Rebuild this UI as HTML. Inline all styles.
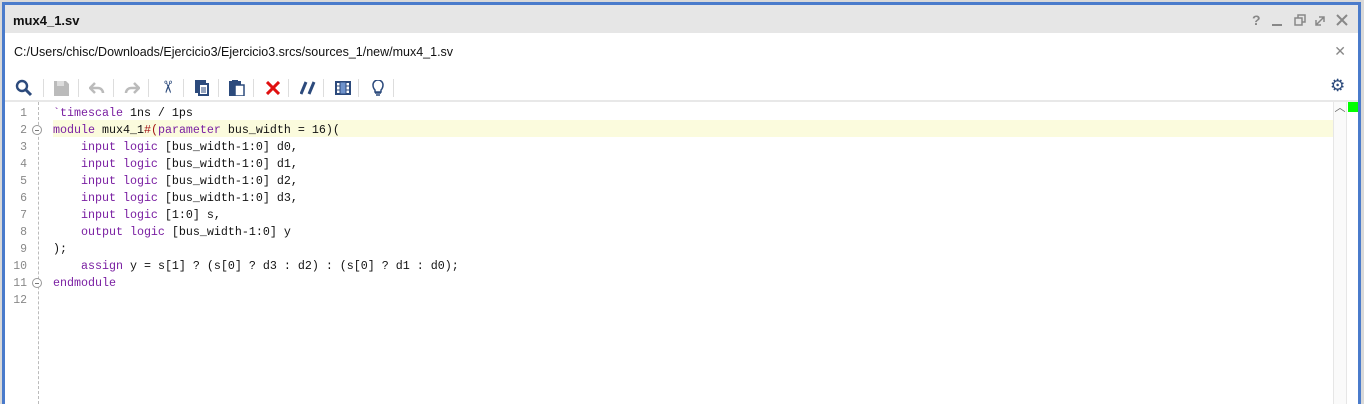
<!DOCTYPE html>
<html><head><meta charset="utf-8"><style>
*{margin:0;padding:0;box-sizing:border-box}
body{width:1364px;height:402px;background:#d9d9d9;overflow:hidden;font-family:"Liberation Sans",sans-serif;position:relative}
#frame{position:absolute;left:2px;top:2px;width:1359px;height:402px;border:3px solid #4a7bcb;border-bottom:none;background:#fff}
#title{position:absolute;left:0;top:0;right:0;height:28px;background:#e6e6e6;font-weight:bold;font-size:13px;color:#111;padding:8px 0 0 8px}
#path{position:absolute;left:9px;top:40px;font-size:12.5px;color:#111}
#tb{position:absolute;left:0;top:68px;right:0;height:28px}
.sep{position:absolute;top:6px;width:1px;height:18px;background:#ddd}
.ic{position:absolute;top:6px}
#ed{position:absolute;left:0;top:95px;right:0;bottom:0;border-top:2px solid #e8e8e8}
.ln{position:absolute;left:0;width:22px;text-align:right;font-family:"Liberation Mono",monospace;font-size:11.5px;color:#888}
.code{position:absolute;left:48px;font-family:"Liberation Mono",monospace;font-size:11.67px;color:#111;white-space:pre;line-height:17px}
.k{color:#7a1fa2}
.r{color:#a31515}
#gut{position:absolute;left:33px;top:0;bottom:0;border-left:1px dashed #bbb}
#hl{position:absolute;left:48px;top:18px;width:1280px;height:17px;background:#fbfbdd}
#sb{position:absolute;left:1328px;top:0;width:14px;bottom:0;background:#fafafa;border-left:1px solid #e6e6e6;border-right:1px solid #e6e6e6}
.fold{position:absolute;left:27px;width:10px;height:10px;border:1px solid #999;border-radius:50%;background:#fff}
.fold:after{content:"";position:absolute;left:2px;top:4px;width:4px;height:1px;background:#777}
</style></head><body>
<div id="frame">
<div id="title">mux4_1.sv
<svg style="position:absolute;right:8px;top:8px" width="100" height="14" fill="none" stroke="#888" stroke-width="2">
<text x="2" y="12" fill="#888" stroke="none" font-size="14" font-weight="bold" font-family="Liberation Sans">?</text>
<line x1="22" y1="12" x2="32" y2="12"/>
<rect x="45" y="5" width="7" height="7" stroke-width="1.5"/><path d="M48 5V2h7v7h-3" stroke-width="1.5"/>
<path d="M66 12l8-8M69 4h5v5M66 7v5h5" stroke-width="1.5"/>
<path d="M87 2l10 10M97 2L87 12"/>
</svg></div>
<div id="path">C:/Users/chisc/Downloads/Ejercicio3/Ejercicio3.srcs/sources_1/new/mux4_1.sv</div>
<div style="position:absolute;right:12px;top:38px;color:#888;font-size:14px">✕</div>
<div id="tb">
<svg class="ic" style="left:10px" width="18" height="18"><circle cx="7" cy="7" r="5" fill="none" stroke="#2c4a7c" stroke-width="2.4"/><line x1="11" y1="11" x2="16" y2="16" stroke="#2c4a7c" stroke-width="3"/></svg>
<div class="sep" style="left:38px"></div>
<svg class="ic" style="left:49px;top:8px" width="15" height="15"><path d="M0 0h12l3 3v12H0z" fill="#bbb"/><rect x="3" y="0" width="7" height="5" fill="#ddd"/></svg>
<div class="sep" style="left:73px"></div>
<svg class="ic" style="left:84px;top:9px" width="16" height="12"><path d="M6 1L1 6l5 5M1 6h8a5 5 0 0 1 5 5" fill="none" stroke="#bbb" stroke-width="2.5"/></svg>
<div class="sep" style="left:108px"></div>
<svg class="ic" style="left:119px;top:9px" width="16" height="12"><path d="M10 1l5 5-5 5M15 6H7a5 5 0 0 0-5 5" fill="none" stroke="#bbb" stroke-width="2.5"/></svg>
<div class="sep" style="left:143px"></div>
<div class="ic" style="left:155px;top:4px;color:#2c4a7c;font-size:17px;transform:rotate(90deg)">✂</div>
<div class="sep" style="left:178px"></div>
<svg class="ic" style="left:190px;top:7px" width="14" height="16"><rect x="0" y="0" width="11" height="13" fill="#2c4a7c"/><rect x="3" y="3" width="11" height="13" fill="#2c4a7c"/><rect x="5" y="5" width="7" height="9" fill="#fff"/><path d="M6 8h5M6 10h5M6 12h5" stroke="#2c4a7c"/></svg>
<div class="sep" style="left:213px"></div>
<svg class="ic" style="left:224px;top:7px" width="16" height="16"><rect x="0" y="1" width="12" height="15" fill="#2c4a7c"/><rect x="6" y="5" width="9" height="11" fill="#fff" stroke="#2c4a7c" stroke-width="1.5"/><rect x="3" y="0" width="6" height="3" fill="#2c4a7c"/></svg>
<div class="sep" style="left:248px"></div>
<svg class="ic" style="left:261px;top:8px" width="14" height="14"><path d="M1 1l12 12M13 1L1 13" stroke="#e01010" stroke-width="3"/></svg>
<div class="sep" style="left:283px"></div>
<svg class="ic" style="left:295px;top:8px" width="16" height="14"><path d="M6 1L1 13M14 1L9 13" stroke="#2c4a7c" stroke-width="3"/></svg>
<div class="sep" style="left:318px"></div>
<svg class="ic" style="left:330px;top:8px" width="16" height="14"><rect x="1" y="1" width="14" height="12" fill="#fff" stroke="#2c4a7c" stroke-width="2"/><rect x="5" y="1" width="6" height="12" fill="#6f93cc" stroke="#2c4a7c" stroke-width="1"/><path d="M1 5h4M1 9h4M11 5h4M11 9h4" stroke="#2c4a7c"/></svg>
<div class="sep" style="left:353px"></div>
<svg class="ic" style="left:367px;top:7px" width="12" height="16"><path d="M3 10C1 8 1 6 1 5a5 5 0 0 1 10 0c0 1 0 3-2 5v2H3z" fill="#fff" stroke="#2c4a7c" stroke-width="1.5"/><path d="M3 13h6M4 15h4" stroke="#2c4a7c" stroke-width="1.5"/></svg>
<div class="sep" style="left:388px"></div>
<div class="ic" style="left:1325px;top:3px;color:#2c4a7c;font-size:17px">⚙</div>
</div>
<div id="ed">
<div id="hl"></div>
<div id="gut"></div>
<div class="fold" style="top:23px"></div>
<div class="fold" style="top:176px"></div>
<div style="position:absolute;top:3px;left:0">
<div class="ln" style="top:0;line-height:17px">1<br>2<br>3<br>4<br>5<br>6<br>7<br>8<br>9<br>10<br>11<br>12</div>
</div>
<div class="code" style="top:3px"><span class="k">`timescale</span> 1ns / 1ps
<span class="k">module</span> mux4_1<span class="r">#(</span><span class="k">parameter</span> bus_width = 16)(
    <span class="k">input logic</span> [bus_width-1:0] d0,
    <span class="k">input logic</span> [bus_width-1:0] d1,
    <span class="k">input logic</span> [bus_width-1:0] d2,
    <span class="k">input logic</span> [bus_width-1:0] d3,
    <span class="k">input logic</span> [1:0] s,
    <span class="k">output logic</span> [bus_width-1:0] y
);
    <span class="k">assign</span> y = s[1] ? (s[0] ? d3 : d2) : (s[0] ? d1 : d0);
<span class="k">endmodule</span>
</div>
<div id="sb"><div style="text-align:center;color:#666;font-size:11px;line-height:12px">︿</div></div>
<div style="position:absolute;left:1343px;top:0;width:10px;height:10px;background:#00ff00"></div>
</div>
</div>
</body></html>
